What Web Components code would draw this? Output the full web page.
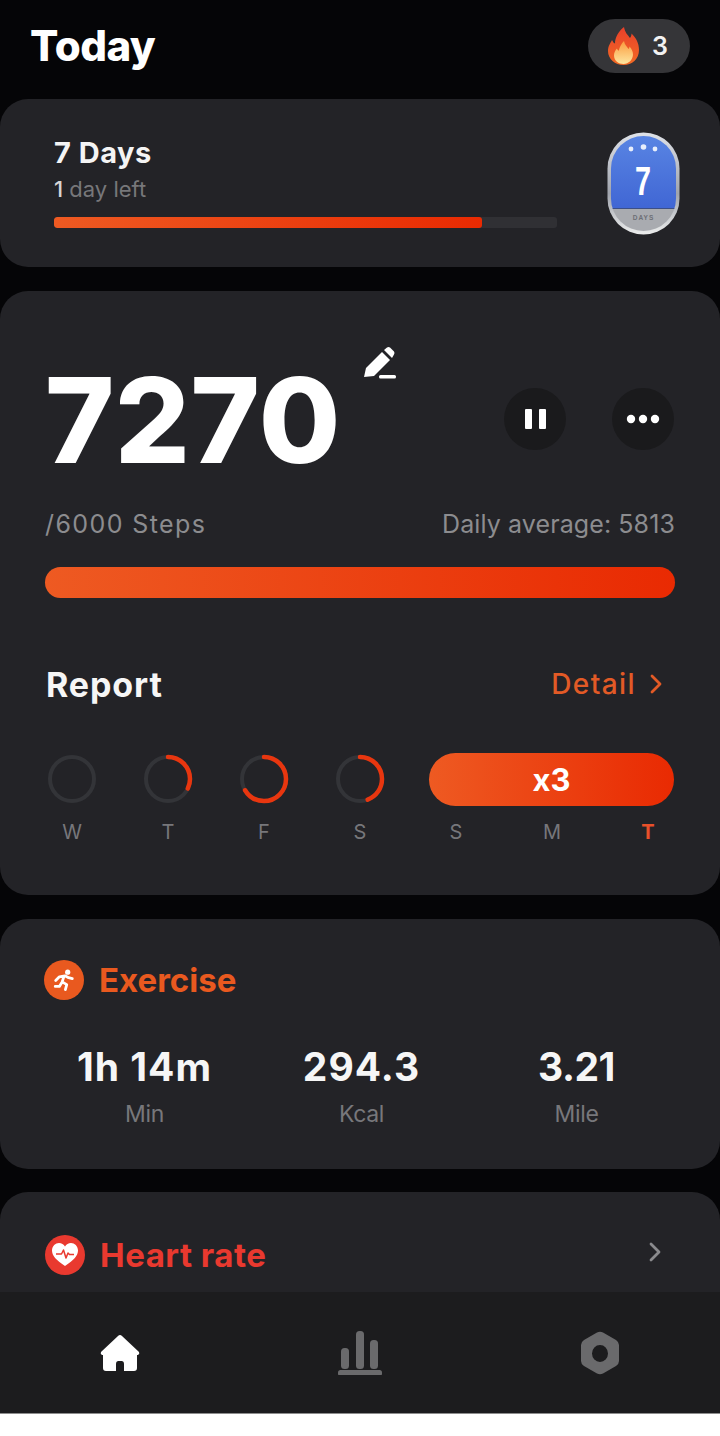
<!DOCTYPE html>
<html lang="en">
<head>
<meta charset="utf-8">
<title>Today</title>
<style>
    html, body { margin: 0; padding: 0; background: #fff; }
    body { font-family: "Inter", "Liberation Sans", sans-serif; }
</style>
</head>
<body>
<app-shell>
    <app-header></app-header>
    <streak-card></streak-card>
    <steps-card></steps-card>
    <exercise-card></exercise-card>
    <heart-card></heart-card>
</app-shell>

<script>
const GRADIENT = 'linear-gradient(90deg, #ee5a22 0%, #e92a02 100%)';

class AppShell extends HTMLElement {
    constructor() {
        super();
        this.attachShadow({ mode: 'open' });
        this.shadowRoot.innerHTML = `
            <style>
                :host { display: flex; flex-direction: column; width: 720px; height: 1436px; overflow: hidden; }
                .scroll { height: 1292px; flex: none; overflow: hidden; background: #050507; display: flex; flex-direction: column; }
                .foot { height: 22px; flex: none; background: #fff; border-top: 1px solid #8d8d8d; }
            </style>
            <div class="scroll"><slot></slot></div>
            <tab-bar></tab-bar>
            <div class="foot"></div>
        `;
    }
}

class AppHeader extends HTMLElement {
    constructor() {
        super();
        this.attachShadow({ mode: 'open' });
        this.shadowRoot.innerHTML = `
            <style>
                :host { display: flex; flex: none; height: 99px; box-sizing: border-box; padding: 19px 30px 0 30px; justify-content: space-between; align-items: flex-start; }
                h1 { margin: 4px 0 0; font-size: 42px; line-height: 46px; font-weight: 800; color: #fff; letter-spacing: -0.5px; }
                .pill { width: 102px; height: 54px; border-radius: 27px; background: #353538; display: flex; align-items: center; box-sizing: border-box; padding-left: 19px; gap: 12px; color: #f2f2f2; font-size: 25px; font-weight: 600; }
                svg { display: block; }
            </style>
            <h1>Today</h1>
            <div class="pill">
                <svg width="33" height="40" viewBox="0 0 33 40">
                    <defs>
                        <linearGradient id="fl" x1="0" y1="0" x2="0" y2="1"><stop offset="0" stop-color="#e8402a"/><stop offset="1" stop-color="#f26a24"/></linearGradient>
                        <linearGradient id="fi" x1="0" y1="0" x2="0" y2="1"><stop offset="0" stop-color="#fb9a3c"/><stop offset="1" stop-color="#fde6a0"/></linearGradient>
                    </defs>
                    <path d="M17 1c1 6 4 8 6 11 1-1 1.500-3 1.500-4.500C29 12 32 17 32 24c0 9-7 15-15.500 15S1 33 1 25c0-5 2.500-8 4-11 .8 1.500 1.500 3 3 3.500C8 11 12 5 17 1z" fill="url(#fl)"/>
                    <path d="M17 15c.5 3.500 3 5.500 4.500 8 .6-.6 1-1.500 1-2.500 2 2 3.500 5 3.500 8 0 5-4.500 9.500-9.500 9.500S7 34.500 7 29.500c0-3 1.500-5.500 3-7 .3 1 .8 1.800 1.800 2.200C12.500 21 14.500 17.500 17 15z" fill="url(#fi)"/>
                </svg>
                <span>3</span>
            </div>
        `;
    }
}

class BaseCard extends HTMLElement {
    constructor() {
        super();
        this.attachShadow({ mode: 'open' });
    }
    get cardCss() {
        return `:host { display: block; flex: none; background: #232327; border-radius: 28px; box-sizing: border-box; }`;
    }
}

class StreakCard extends BaseCard {
    connectedCallback() {
        this.shadowRoot.innerHTML = `
            <style>
                ${this.cardCss}
                :host { height: 168px; margin-bottom: 24px; padding: 36px 40px 0 54px; display: flex; justify-content: space-between; }
                .info { width: 503px; }
                .name { font-size: 29px; line-height: 36px; font-weight: 700; color: #f4f4f4; letter-spacing: 0.5px; }
                .left { margin-top: 4px; font-size: 22px; line-height: 28px; color: #77777a; letter-spacing: 0; }
                .left b { color: #d6d6d6; font-weight: 500; }
                .track { margin-top: 14px; height: 11px; border-radius: 3px; background: #303034; overflow: hidden; }
                .fill { width: 428px; height: 100%; border-radius: 3px; background: ${GRADIENT}; }
                svg { display: block; margin-top: -3px; }
            </style>
            <div class="info">
                <div class="name">7 Days</div>
                <div class="left"><b>1</b> day left</div>
                <div class="track"><div class="fill"></div></div>
            </div>
            <svg width="73" height="103" viewBox="0 0 73 103">
                <defs>
                    <linearGradient id="blue" x1="0" y1="0" x2="0" y2="1"><stop offset="0" stop-color="#5a86e4"/><stop offset="1" stop-color="#4066d4"/></linearGradient>
                    <linearGradient id="rim" x1="0" y1="0" x2="0" y2="1"><stop offset="0" stop-color="#dfe2e8"/><stop offset=".6" stop-color="#a0a4ad"/><stop offset="1" stop-color="#eceded"/></linearGradient>
                    <clipPath id="inner"><rect x="4" y="4" width="65" height="95" rx="32.500"/></clipPath>
                </defs>
                <rect x="0.500" y="0.500" width="72" height="102" rx="36" fill="url(#rim)"/>
                <g clip-path="url(#inner)">
                    <rect x="0" y="0" width="73" height="77" fill="url(#blue)"/>
                    <rect x="0" y="76" width="73" height="1" fill="#3d4f86"/>
                    <rect x="0" y="77" width="73" height="26" fill="#a9abb0"/>
                </g>
                <circle cx="24" cy="17" r="2.400" fill="#e8eefb"/>
                <circle cx="36.500" cy="15" r="2.800" fill="#e8eefb"/>
                <circle cx="48" cy="17" r="2.400" fill="#e8eefb"/>
                <text x="36" y="63" text-anchor="middle" font-family="Liberation Sans, sans-serif" font-size="40" font-weight="700" fill="#fff" textLength="16" lengthAdjust="spacingAndGlyphs">7</text>
                <text x="36.500" y="88" text-anchor="middle" font-family="Liberation Sans, sans-serif" font-size="6.500" font-weight="700" fill="#6d6f76" letter-spacing="1">DAYS</text>
            </svg>
        `;
    }
}

class DayRing extends HTMLElement {
    constructor() {
        super();
        this.attachShadow({ mode: 'open' });
    }
    connectedCallback() {
        const r = 22;
        const c = 2 * Math.PI * r;
        const pct = Number(this.getAttribute('pct') || 0);
        const arc = pct > 0
            ? `<circle cx="25" cy="25" r="${r}" fill="none" stroke="#e8360f" stroke-width="4.500" stroke-linecap="round"
                 stroke-dasharray="${c * pct} ${c}" transform="rotate(-90 25 25)"/>`
            : '';
        this.shadowRoot.innerHTML = `
            <style>
                :host { display: flex; justify-content: center; align-items: center; height: 54px; }
                svg { display: block; }
            </style>
            <svg width="50" height="50" viewBox="0 0 50 50">
                <circle cx="25" cy="25" r="${r}" fill="none" stroke="#333438" stroke-width="4"/>
                ${arc}
            </svg>
        `;
    }
}

class StepsCard extends BaseCard {
    connectedCallback() {
        const labels = ['W', 'T', 'F', 'S', 'S', 'M', 'T'];
        this.shadowRoot.innerHTML = `
            <style>
                ${this.cardCss}
                :host { height: 604px; margin-bottom: 24px; padding: 55px 45px 0 45px; }
                .hero { display: flex; height: 135px; }
                .count { margin-top: 9px; font-size: 118px; line-height: 130px; font-weight: 800; color: #fff; letter-spacing: 0.5px; height: 130px; }
                .pen { margin: 0 0 0 22px; align-self: flex-start; display: block; }
                .actions { margin-left: auto; margin-top: 42px; display: flex; gap: 46px; margin-right: 1px; }
                .btn { width: 62px; height: 62px; border-radius: 50%; background: #1a1a1c; display: flex; align-items: center; justify-content: center; }
                .stats { margin-top: 26px; display: flex; justify-content: space-between; font-size: 25px; line-height: 34px; color: #8c8c8f; }
                .stats .a { letter-spacing: 1.4px; }
                .stats .b { letter-spacing: 0.1px; }
                .bar { margin-top: 26px; height: 31px; border-radius: 16px; background: ${GRADIENT}; }
                .report { margin-top: 67px; display: flex; justify-content: space-between; align-items: center; height: 38px; }
                h2 { margin: 0 0 0 1px; font-size: 34px; font-weight: 700; color: #f6f6f6; letter-spacing: 0.9px; }
                .detail { display: flex; align-items: center; gap: 14px; color: #e25a26; font-size: 28px; font-weight: 500; letter-spacing: 1.4px; margin-right: 13px; }
                .week { margin: 49px 0 0 -21px; display: grid; grid-template-columns: repeat(7, 96px); position: relative; }
                .week day-ring { grid-row: 1; }
                .pill { grid-row: 1; grid-column: 5 / 8; margin: 1px 22px 0 21px; height: 53px; border-radius: 27px; background: ${GRADIENT}; color: #fff; font-size: 31px; font-weight: 700; display: flex; align-items: center; justify-content: center; }
                .lbl { grid-row: 2; margin-top: 14px; text-align: center; font-size: 20px; line-height: 24px; color: #77777b; }
                .lbl.now { color: #e8502a; font-weight: 700; }
            </style>
            <div class="hero">
                <div class="count">7270</div>
                <svg class="pen" width="34" height="34" viewBox="0 0 34 34">
                    <path d="M1 31 L3 22 L19 6 L27 14 L11 30 Z" fill="#fff"/>
                    <path d="M21 4 L24 1.500 Q25.500 .5 27 1.500 L31 5.500 Q32 7 31 8.500 L29 12 Z" fill="#fff"/>
                    <rect x="16" y="29" width="17" height="3.500" rx="1.500" fill="#fff"/>
                </svg>
                <div class="actions">
                    <div class="btn">
                        <svg width="21" height="20" viewBox="0 0 21 20"><rect x="0" y="0" width="7" height="20" rx="1" fill="#fff"/><rect x="14" y="0" width="7" height="20" rx="1" fill="#fff"/></svg>
                    </div>
                    <div class="btn">
                        <svg width="34" height="10" viewBox="0 0 34 10"><circle cx="5" cy="5" r="4.200" fill="#fff"/><circle cx="17" cy="5" r="4.200" fill="#fff"/><circle cx="29" cy="5" r="4.200" fill="#fff"/></svg>
                    </div>
                </div>
            </div>
            <div class="stats"><span class="a">/6000 Steps</span><span class="b">Daily average: 5813</span></div>
            <div class="bar"></div>
            <div class="report">
                <h2>Report</h2>
                <div class="detail">Detail
                    <svg width="12" height="20" viewBox="0 0 12 20"><path d="M2 2 L10 10 L2 18" fill="none" stroke="#e25a26" stroke-width="2.800" stroke-linecap="round" stroke-linejoin="round"/></svg>
                </div>
            </div>
            <div class="week">
                <day-ring pct="0"></day-ring>
                <day-ring pct="0.32"></day-ring>
                <day-ring pct="0.66"></day-ring>
                <day-ring pct="0.44"></day-ring>
                <div class="pill">x3</div>
                ${labels.map((l, i) => `<div class="lbl${i === 6 ? ' now' : ''}">${l}</div>`).join('')}
            </div>
        `;
    }
}

class CardTitle extends HTMLElement {
    constructor() {
        super();
        this.attachShadow({ mode: 'open' });
        this.shadowRoot.innerHTML = `
            <style>
                :host { display: flex; align-items: center; gap: 15px; font-size: 33px; font-weight: 700; letter-spacing: 0; line-height: 40px; color: var(--title-color); }
                .dot { width: 40px; height: 40px; border-radius: 50%; background: var(--title-color); display: flex; align-items: center; justify-content: center; }
            </style>
            <div class="dot"><slot name="icon"></slot></div>
            <slot></slot>
        `;
    }
}

class ExerciseCard extends BaseCard {
    connectedCallback() {
        const stats = [['1h 14m', 'Min', 1], ['294.3', 'Kcal', 1], ['3.21', 'Mile', -0.5]];
        this.shadowRoot.innerHTML = `
            <style>
                ${this.cardCss}
                :host { height: 250px; margin-bottom: 23px; padding: 41px 35px 0 44px; }
                card-title { --title-color: #e9591f; }
                svg { display: block; }
                .grid { margin: 43px 0 0 -8px; display: grid; grid-template-columns: 217px 217px 213px; justify-content: start; text-align: center; }
                .v { font-size: 39px; line-height: 48px; font-weight: 700; color: #f6f6f6; }
                .k { margin-top: 9px; font-size: 23px; line-height: 28px; color: #77777b; letter-spacing: -0.3px; }
            </style>
            <card-title>
                <svg slot="icon" width="24" height="24" viewBox="0 0 26 26">
                    <circle cx="17" cy="4.500" r="2.800" fill="#fff"/>
                    <path d="M4 13.500 L8 9.500 L14 8.500 L18 10.500 L22 11.500 M13 9 L11 15 L16 18 L14.500 23.500 M10.500 16 L8 20 L3.500 20" fill="none" stroke="#fff" stroke-width="3" stroke-linecap="round" stroke-linejoin="round"/>
                </svg>
                Exercise
            </card-title>
            <div class="grid">
                ${stats.map(s => `<div><div class="v" style="letter-spacing:${s[2]}px">${s[0]}</div><div class="k">${s[1]}</div></div>`).join('')}
            </div>
        `;
    }
}

class HeartCard extends BaseCard {
    connectedCallback() {
        this.shadowRoot.innerHTML = `
            <style>
                ${this.cardCss}
                :host { height: 150px; padding: 43px 59px 0 45px; display: flex; justify-content: space-between; align-items: flex-start; }
                card-title { --title-color: #e9392f; letter-spacing: 0.5px; }
                svg { display: block; }
                .chev { margin-top: 7px; }
            </style>
            <card-title>
                <svg slot="icon" width="28" height="26" viewBox="0 0 28 26">
                    <path d="M14 24 C5 18 1 13.500 1 8.500 C1 4 4.500 1 8 1 C10.500 1 12.800 2.300 14 4.500 C15.200 2.300 17.500 1 20 1 C23.500 1 27 4 27 8.500 C27 13.500 23 18 14 24 Z" fill="#fff"/>
                    <path d="M5 12 L10.500 12 L12.500 8 L15 16 L17 11 L18.500 12.500 L23 12.500" fill="none" stroke="#e9392f" stroke-width="1.500" stroke-linejoin="round"/>
                </svg>
                Heart rate
            </card-title>
            <svg class="chev" width="12" height="20" viewBox="0 0 12 20"><path d="M2 2 L10 10 L2 18" fill="none" stroke="#8a8a8d" stroke-width="2.800" stroke-linecap="round" stroke-linejoin="round"/></svg>
        `;
    }
}

class TabBar extends HTMLElement {
    constructor() {
        super();
        this.attachShadow({ mode: 'open' });
        this.shadowRoot.innerHTML = `
            <style>
                :host { display: grid; flex: none; height: 121px; background: #1c1c1e; grid-template-columns: repeat(3, 240px); align-items: center; justify-items: center; }
                svg { display: block; margin-bottom: -1px; }
            </style>
            <svg width="40" height="38" viewBox="0 0 40 38">
                <path fill-rule="evenodd" d="M20 1 Q21 1 22 2 L39 18 Q40 20 38 21 L37 21 L37 34 Q37 37 34 37 L24 37 L24 30 Q24 27 21.500 27 L18.500 27 Q16 27 16 30 L16 37 L6 37 Q3 37 3 34 L3 21 L2 21 Q0 20 1 18 L18 2 Q19 1 20 1 Z" fill="#fff"/>
            </svg>
            <svg width="44" height="44" viewBox="0 0 44 44" fill="#6a6a6c">
                <rect x="3" y="17" width="8" height="21" rx="3.500"/>
                <rect x="18" y="0" width="8" height="38" rx="3.500"/>
                <rect x="32" y="9" width="8" height="29" rx="3.500"/>
                <rect x="0" y="39" width="44" height="6" rx="2.500"/>
            </svg>
            <svg width="40" height="44" viewBox="0 0 40 44">
                <path fill-rule="evenodd" d="M17 1.500 Q20 0 23 1.500 L36 9 Q39 11 39 14 L39 30 Q39 33 36 35 L23 42.500 Q20 44 17 42.500 L4 35 Q1 33 1 30 L1 14 Q1 11 4 9 Z M20 14 A8 8.500 0 1 0 20 31 A8 8.500 0 1 0 20 14 Z" fill="#6a6a6c"/>
            </svg>
        `;
    }
}

customElements.define('app-shell', AppShell);
customElements.define('app-header', AppHeader);
customElements.define('streak-card', StreakCard);
customElements.define('day-ring', DayRing);
customElements.define('steps-card', StepsCard);
customElements.define('card-title', CardTitle);
customElements.define('exercise-card', ExerciseCard);
customElements.define('heart-card', HeartCard);
customElements.define('tab-bar', TabBar);
</script>
</body>
</html>
